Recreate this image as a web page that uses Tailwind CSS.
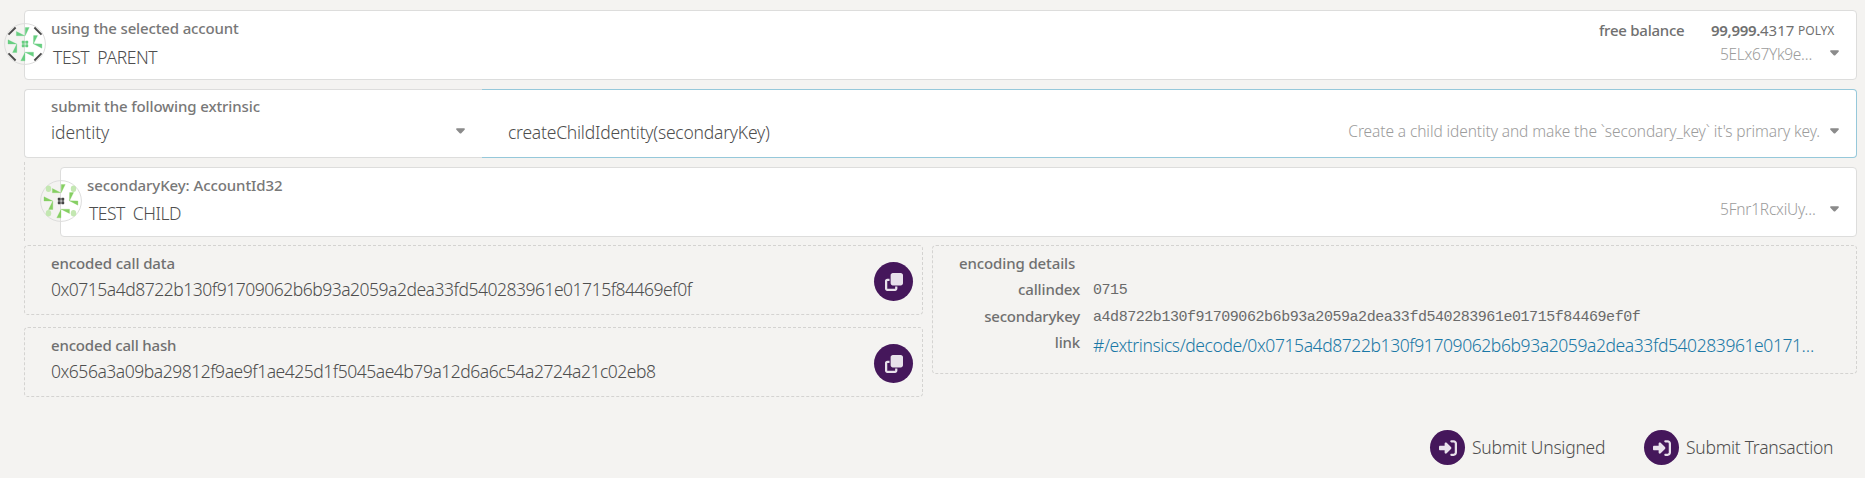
<!DOCTYPE html>
<html lang="en">
<head>
<meta charset="utf-8">
<title>Extrinsics</title>
<script src="https://cdn.jsdelivr.net/npm/@tailwindcss/browser@4"></script>
</head>
<body class="h-[478px] overflow-hidden bg-[#f4f3f1] font-['Noto_Sans','Open_Sans',sans-serif] text-[17.5px] leading-[24px] font-light whitespace-nowrap text-[#4e4e4e]">
<svg class="hidden">
  <symbol id="caret" viewBox="0 0 9 6"><path fill="#8b8b8b" d="M1 0.3h7c.9 0 1.2.9.6 1.5L5.3 5.2c-.5.5-1.1.5-1.6 0L.4 1.8C-.2 1.2.1.3 1 .3z"/></symbol>
  <symbol id="clone" viewBox="0 0 512 512"><path fill="#e8e1eb" d="M288 448L64 448l0-224 64 0 0-64-64 0c-35.3 0-64 28.7-64 64L0 448c0 35.3 28.7 64 64 64l224 0c35.3 0 64-28.7 64-64l0-64-64 0 0 64zm-64-96l224 0c35.3 0 64-28.7 64-64l0-224c0-35.3-28.7-64-64-64L224 0c-35.3 0-64 28.7-64 64l0 224c0 35.3 28.7 64 64 64z"/></symbol>
  <symbol id="signin" viewBox="0 0 512 512"><path fill="#e8e1eb" d="M217.9 105.9L340.7 228.7c7.2 7.2 11.3 17.1 11.3 27.3s-4.1 20.1-11.3 27.3L217.9 406.1c-6.4 6.4-15 9.9-24 9.9c-18.7 0-33.9-15.2-33.9-33.9l0-62.1L32 320c-17.7 0-32-14.3-32-32l0-64c0-17.7 14.3-32 32-32l128 0 0-62.1c0-18.7 15.2-33.9 33.9-33.9c9 0 17.6 3.6 24 9.9zM352 416l64 0c17.7 0 32-14.3 32-32l0-256c0-17.7-14.3-32-32-32l-64 0c-17.7 0-32-14.3-32-32s14.3-32 32-32l64 0c53 0 96 43 96 96l0 256c0 53-43 96-96 96l-64 0c-17.7 0-32-14.3-32-32s14.3-32 32-32z"/></symbol>
  <symbol id="leaves" viewBox="-21 -21 42 42">
    <path d="M.3-16.5H4.200L.2-8.300zM-8.600-12.500L-.3-8.300H-8.600zM8.600-8.400h4L8.400 0zM8.400-.2L16.900 0V4.200zM-17-4.200L-8.300 0H-17zM-8.200 0V8.500H-12.400zM0 8.200H8.500V12.500zM0 8.400V16.800H-4.200z" stroke-width=".3"/>
  </symbol>
  <symbol id="grid" viewBox="-21 -21 42 42">
    <rect x="-3.200" y="-3.200" width="2.900" height="2.900" rx=".6"/><rect x=".3" y="-3.200" width="2.900" height="2.900" rx=".6"/><rect x="-3.200" y=".3" width="2.900" height="2.900" rx=".6"/><rect x=".3" y=".3" width="2.900" height="2.900" rx=".6"/>
  </symbol>
</svg>

<main class="w-[1857px] pt-[10px] pl-[24px]">
  <!-- account -->
  <section class="relative flex h-[70px] justify-between rounded border border-[#dddddc] bg-white pl-[26px]">
    <div class="pt-[7px]">
      <div class="text-[15px] leading-[20px] font-medium tracking-[-0.15px] text-[#787878]">using the selected account</div>
      <div class="mt-[7px] pl-[2px] tracking-[-0.4px] [word-spacing:4px]">TEST PARENT</div>
    </div>
    <div class="pt-[9px]">
      <div class="flex h-[20px] pr-[22px] text-[15px] leading-[20px] text-[#707070]">
        <span class="w-[112px] font-medium tracking-[-0.25px]">free balance</span>
        <span class="w-[49px] font-semibold tracking-[-0.3px]">99,999.</span><span class="w-[38px] font-normal">4317</span><span class="w-[36px] pt-px text-[12px] font-normal">POLYX</span>
      </div>
      <div class="mt-[4px] flex h-[20px] justify-end pr-[17px] text-[15.5px] leading-[20px] text-[#9c9c9c]">
        <span class="w-[110px] tracking-[-0.33px]">5ELx67Yk9e…</span>
        <svg class="mt-[6px] h-[6px] w-[9px]"><use href="#caret"/></svg>
      </div>
    </div>
    <svg class="absolute top-[12px] -left-[21px] size-[42px]" viewBox="-21 -21 42 42">
      <circle r="20.400" fill="none" stroke="#dddddc"/>
      <use href="#leaves" x="-21" y="-21" width="42" height="42" fill="#67ce80" stroke="#67ce80"/>
      <use href="#grid" x="-21" y="-21" width="42" height="42" fill="#67ce80"/>
      <path d="M-16.500-9.400l7.100-7.100M16.500-9.400l-7.100-7.100M-16.500 9.400l7.100 7.100M16.500 9.400l-7.100 7.100" stroke="#4b4b4b" stroke-width="1.900"/>
    </svg>
  </section>

  <!-- extrinsic -->
  <section class="mt-[9px] flex h-[69px]">
    <div class="flex w-[458px] justify-between rounded-l border border-r-0 border-[#dddddc] bg-white pt-[6px] pr-[17px] pl-[26px]">
      <div>
        <div class="text-[15px] leading-[20px] font-medium tracking-[-0.12px] text-[#787878]">submit the following extrinsic</div>
        <div class="mt-[4px] tracking-[-0.09px]">identity</div>
      </div>
      <svg class="mt-[32px] h-[6px] w-[9px]"><use href="#caret"/></svg>
    </div>
    <div class="flex flex-1 justify-between rounded-r border border-l-0 border-[#96c8da] bg-white pr-[17px] pl-[26px]">
      <div class="mt-[30px] tracking-[-0.23px]">createChildIdentity(secondaryKey)</div>
      <div class="mt-[31px] flex h-[20px] gap-[10px] text-[15.5px] leading-[20px] text-[#9c9c9c]">
        <span class="tracking-[-0.1px]">Create a child identity and make the `secondary_key` it's primary key.</span>
        <svg class="mt-[7px] h-[6px] w-[9px]"><use href="#caret"/></svg>
      </div>
    </div>
  </section>

  <!-- parameter -->
  <div class="mt-[4px] h-[79px] border-l border-dashed border-[#d4d3d1] pt-[5px] pl-[35px]">
    <section class="relative flex h-[70px] justify-between rounded border border-[#dddddc] bg-white pr-[17px] pl-[26px]">
      <div class="pt-[7px]">
        <div class="text-[15px] leading-[20px] font-medium tracking-[-0.09px] text-[#787878]">secondaryKey: AccountId32</div>
        <div class="mt-[6px] pl-[2px] tracking-[-0.5px] [word-spacing:4px]">TEST CHILD</div>
      </div>
      <div class="mt-[31px] flex h-[20px] text-[15.5px] leading-[20px] text-[#9c9c9c]">
        <span class="w-[110px] tracking-[-0.21px]">5Fnr1RcxiUy…</span>
        <svg class="mt-[7px] h-[6px] w-[9px]"><use href="#caret"/></svg>
      </div>
      <svg class="absolute top-[12px] -left-[21px] size-[42px]" viewBox="-21 -21 42 42">
        <circle r="20.400" fill="none" stroke="#dddddc"/>
        <use href="#leaves" x="-21" y="-21" width="42" height="42" fill="#86cf63" stroke="#86cf63"/>
        <use href="#grid" x="-21" y="-21" width="42" height="42" fill="#464646"/>
        <g fill="#c3e7b1"><ellipse cx="-12.500" cy="-12.300" rx="2.700" ry="3.200"/><ellipse cx="12.500" cy="-12.300" rx="2.700" ry="3.200"/><ellipse cx="-12.500" cy="12.300" rx="2.700" ry="3.200"/><ellipse cx="12.500" cy="12.300" rx="2.700" ry="3.200"/></g>
      </svg>
    </section>
  </div>

  <!-- encoded output -->
  <div class="mt-[4px] flex items-start gap-[9px]">
    <div class="flex w-[899px] flex-col gap-[12px]">
      <section class="flex h-[70px] items-start justify-between rounded border border-dashed border-[#d4d3d1] pr-[9px] pl-[26px]">
        <div class="pt-[7px]">
          <div class="text-[15px] leading-[20px] font-medium tracking-[-0.11px] text-[#707070]">encoded call data</div>
          <div class="mt-[4px] tracking-[-0.49px]">0x0715a4d8722b130f91709062b6b93a2059a2dea33fd540283961e01715f84469ef0f</div>
        </div>
        <button class="mt-[16px] flex size-[39px] items-center justify-center rounded-full bg-[#45175b]"><svg class="size-[18px]"><use href="#clone"/></svg></button>
      </section>
      <section class="flex h-[70px] items-start justify-between rounded border border-dashed border-[#d4d3d1] pr-[9px] pl-[26px]">
        <div class="pt-[7px]">
          <div class="text-[15px] leading-[20px] font-medium tracking-[-0.18px] text-[#707070]">encoded call hash</div>
          <div class="mt-[4px] tracking-[-0.48px]">0x656a3a09ba29812f9ae9f1ae425d1f5045ae4b79a12d6a6c54a2724a21c02eb8</div>
        </div>
        <button class="mt-[16px] flex size-[39px] items-center justify-center rounded-full bg-[#45175b]"><svg class="size-[18px]"><use href="#clone"/></svg></button>
      </section>
    </div>
    <section class="h-[129px] flex-1 rounded border border-dashed border-[#d4d3d1] pt-[7px] pl-[26px]">
      <div class="text-[15px] leading-[20px] font-medium tracking-[-0.12px] text-[#707070]">encoding details</div>
      <div class="mt-[6px] grid grid-cols-[121px_1fr] grid-rows-[27px_26px_30px] gap-x-[13px]">
        <div class="text-right text-[15px] leading-[20px] font-medium tracking-[-0.14px] text-[#707070]">callindex</div>
        <div class="pt-[2px] font-['Liberation_Mono',monospace] text-[15px] leading-[20px] font-normal tracking-[-0.45px] text-[#6a6a6a]">0715</div>
        <div class="text-right text-[15px] leading-[20px] font-medium tracking-[-0.24px] text-[#707070]">secondarykey</div>
        <div class="pt-[2px] font-['Liberation_Mono',monospace] text-[15px] leading-[20px] font-normal tracking-[-0.45px] text-[#6a6a6a]">a4d8722b130f91709062b6b93a2059a2dea33fd540283961e01715f84469ef0f</div>
        <div class="text-right text-[15px] leading-[20px] font-medium tracking-[-0.17px] text-[#707070]">link</div>
        <a class="mt-px tracking-[-0.42px] text-[#1a78a6]">#/extrinsics/decode/0x0715a4d8722b130f91709062b6b93a2059a2dea33fd540283961e0171…</a>
      </div>
    </section>
  </div>

  <!-- actions -->
  <div class="mt-[33px] flex justify-end gap-[37px] pr-[23px]">
    <button class="flex items-center gap-[7px]"><span class="flex size-[35px] items-center justify-center rounded-full bg-[#45175b]"><svg class="size-[18px]"><use href="#signin"/></svg></span><span class="w-[135px] pb-px text-left tracking-[-0.26px]">Submit Unsigned</span></button>
    <button class="flex items-center gap-[7px]"><span class="flex size-[35px] items-center justify-center rounded-full bg-[#45175b]"><svg class="size-[18px]"><use href="#signin"/></svg></span><span class="w-[148px] pb-px text-left tracking-[-0.28px]">Submit Transaction</span></button>
  </div>
</main>
</body>
</html>
